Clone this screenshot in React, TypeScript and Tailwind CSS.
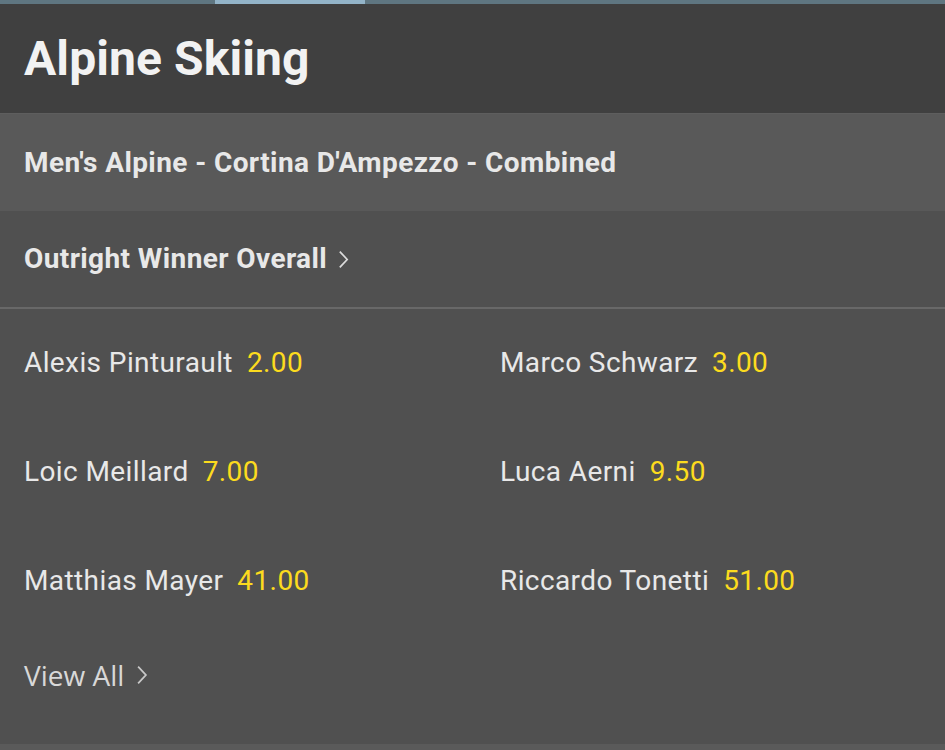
import React from "react";

const runners = [
  { name: "Alexis Pinturault", odds: "2.00" },
  { name: "Marco Schwarz", odds: "3.00" },
  { name: "Loic Meillard", odds: "7.00" },
  { name: "Luca Aerni", odds: "9.50" },
  { name: "Matthias Mayer", odds: "41.00" },
  { name: "Riccardo Tonetti", odds: "51.00" },
];

const Chevron = ({ className }: { className?: string }) => (
  <svg viewBox="0 0 10 18" className={className} fill="none" stroke="currentColor" strokeWidth={1.6}>
    <path d="M1.5 1.5 L8.5 9 L1.5 16.5" />
  </svg>
);

const App = () => {
  return (
    <div className="w-[945px] h-[750px] bg-[#505050] font-['Roboto',sans-serif] text-[#e8e8e8] overflow-hidden flex flex-col">
      <div className="h-[4px] bg-[#5f7681] flex">
        <div className="w-[215px]" />
        <div className="w-[150px] bg-[#93b4c8]" />
      </div>
      <div className="h-[109px] bg-[#404040] flex items-center px-6">
        <h1 className="text-[48px] font-bold tracking-[0.1px] text-[#f2f2f2]">Alpine Skiing</h1>
      </div>
      <div className="h-[98px] bg-[#595959] border-t border-[#5e5e5e] flex items-center px-6">
        <div className="text-[28px] font-bold tracking-[0.4px]">Men's Alpine - Cortina D'Ampezzo - Combined</div>
      </div>
      <div className="h-[98px] border-b-2 border-[#686868] flex items-center px-6 gap-[11px]">
        <div className="text-[28px] font-bold tracking-[0.4px]">Outright Winner Overall</div>
        <Chevron className="w-[11px] h-[19px] text-[#dcdcdc]" />
      </div>
      <div className="grid grid-cols-[476px_1fr] px-6 pt-[33px]">
        {runners.map((r) => (
          <div key={r.name} className="h-[109px] text-[28px] tracking-[0.4px]">
            <span>{r.name}</span>
            <span className="ml-[14px] text-[#fcdb1e]">{r.odds}</span>
          </div>
        ))}
      </div>
      <div className="flex items-center gap-3 px-6 -mt-[15px] font-['Open_Sans',sans-serif] text-[28px] text-[#d8d8d8]">
        <span>View All</span>
        <Chevron className="w-[12px] h-[20px] text-[#c8c8c8]" />
      </div>
      <div className="flex-1" />
      <div className="h-[6px] bg-[#5a5a5a]" />
    </div>
  );
};

export default App;
